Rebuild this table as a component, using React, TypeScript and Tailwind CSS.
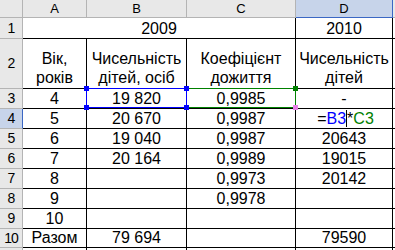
import React from "react";

const font = { fontFamily: '"Liberation Sans", Arial, sans-serif' };

const colHeads = ["A", "B", "C", "D"];

type Row = { n: number; a: string; b: string; c: string; d: React.ReactNode };

const rows: Row[] = [
  { n: 3, a: "4", b: "19 820", c: "0,9985", d: "-" },
  {
    n: 4,
    a: "5",
    b: "20 670",
    c: "0,9987",
    d: (
      <span className="inline-flex items-center pl-[3px]">
        =<span className="text-[#0000ff]">B3</span>
        <span className="inline-block h-[17px] w-px bg-black" />*
        <span className="text-[#008000]">C3</span>
      </span>
    ),
  },
  { n: 5, a: "6", b: "19 040", c: "0,9987", d: "20643" },
  { n: 6, a: "7", b: "20 164", c: "0,9989", d: "19015" },
  { n: 7, a: "8", b: "", c: "0,9973", d: "20142" },
  { n: 8, a: "9", b: "", c: "0,9978", d: "" },
  { n: 9, a: "10", b: "", c: "", d: "" },
  { n: 10, a: "Разом", b: "79 694", c: "", d: "79590" },
];

function RowHead({ n, active }: { n: number | string; active?: boolean }) {
  return (
    <div
      className={
        active
          ? "flex items-center justify-center border-b border-r border-b-[#b4b4b4] border-r-[#3b67c4] bg-[#c7d4ea] text-[14px] tracking-[-1px] text-black"
          : "flex items-center justify-center border-b border-r border-[#b4b4b4] bg-[#e8e8e8] text-[14px] tracking-[-1px] text-black"
      }
    >
      {n}
    </div>
  );
}

const cell =
  "flex items-end justify-center border-b border-r border-black text-[16px] leading-[19px] text-black";

const head2 =
  "flex flex-col items-center justify-end border-b border-r border-black pb-px text-center text-[16px] leading-[19px] text-black";

export default function App() {
  return (
    <div
      className="relative h-[250px] w-[395px] overflow-hidden bg-white"
      style={font}
    >
      <div className="grid grid-cols-[23px_64px_100px_109px_97px_2px] grid-rows-[18px_21px_50px_repeat(7,20px)_19px_3px]">
        {/* header row */}
        <div className="border-b border-r border-[#b4b4b4] bg-[#e8e8e8]" />
        {colHeads.map((h) =>
          h === "D" ? (
            <div
              key={h}
              className="flex items-center justify-center border-b border-r border-b-[#3b67c4] border-r-[#3b67c4] bg-[#c7d4ea] text-[13px] text-black"
            >
              {h}
            </div>
          ) : (
            <div
              key={h}
              className="flex items-center justify-center border-b border-r border-[#b4b4b4] bg-[#e8e8e8] text-[13px] text-black"
            >
              {h}
            </div>
          )
        )}
        <div className="border-b border-[#b4b4b4] bg-[#e8e8e8]" />

        {/* row 1 */}
        <RowHead n={1} />
        <div className={`${cell} col-span-3`}>2009</div>
        <div className={cell}>2010</div>
        <div className="border-b border-black" />

        {/* row 2 */}
        <RowHead n={2} />
        <div className={head2}>
          <span>Вік,</span>
          <span>років</span>
        </div>
        <div className={head2}>
          <span>Чисельність</span>
          <span>дітей, осіб</span>
        </div>
        <div className={head2}>
          <span>Коефіцієнт</span>
          <span>дожиття</span>
        </div>
        <div className={head2}>
          <span>Чисельність</span>
          <span>дітей</span>
        </div>
        <div className="border-b border-black" />

        {rows.map((r) => (
          <React.Fragment key={r.n}>
            <RowHead n={r.n} active={r.n === 4} />
            <div className={cell}>{r.a}</div>
            <div className={cell}>{r.b}</div>
            <div className={cell}>{r.c}</div>
            <div className={cell}>{r.d}</div>
            <div className="border-b border-black" />
          </React.Fragment>
        ))}

        {/* row 11, cut off */}
        <RowHead n="" />
        <div className="border-r border-black" />
        <div className="border-r border-black" />
        <div className="border-r border-black" />
        <div className="border-r border-black" />
        <div />
      </div>

      {/* range finder: C3 (green) */}
      <div className="absolute left-[186px] top-[88px] h-[20px] w-[110px] border border-[#008000]" />
      <div className="absolute left-[293px] top-[86px] h-[5px] w-[5px] bg-[#008000]" />
      <div className="absolute left-[293px] top-[105px] h-[5px] w-[5px] bg-[#e67fe6]" />

      {/* range finder: B3 (blue) */}
      <div className="absolute left-[86px] top-[88px] h-[20px] w-[101px] border border-[#0000ff]" />
      <div className="absolute left-[84px] top-[86px] h-[5px] w-[5px] bg-[#0000ff]" />
      <div className="absolute left-[184px] top-[86px] h-[5px] w-[5px] bg-[#0000ff]" />
      <div className="absolute left-[84px] top-[105px] h-[5px] w-[5px] bg-[#0000ff]" />
      <div className="absolute left-[184px] top-[105px] h-[5px] w-[5px] bg-[#0000ff]" />
    </div>
  );
}
